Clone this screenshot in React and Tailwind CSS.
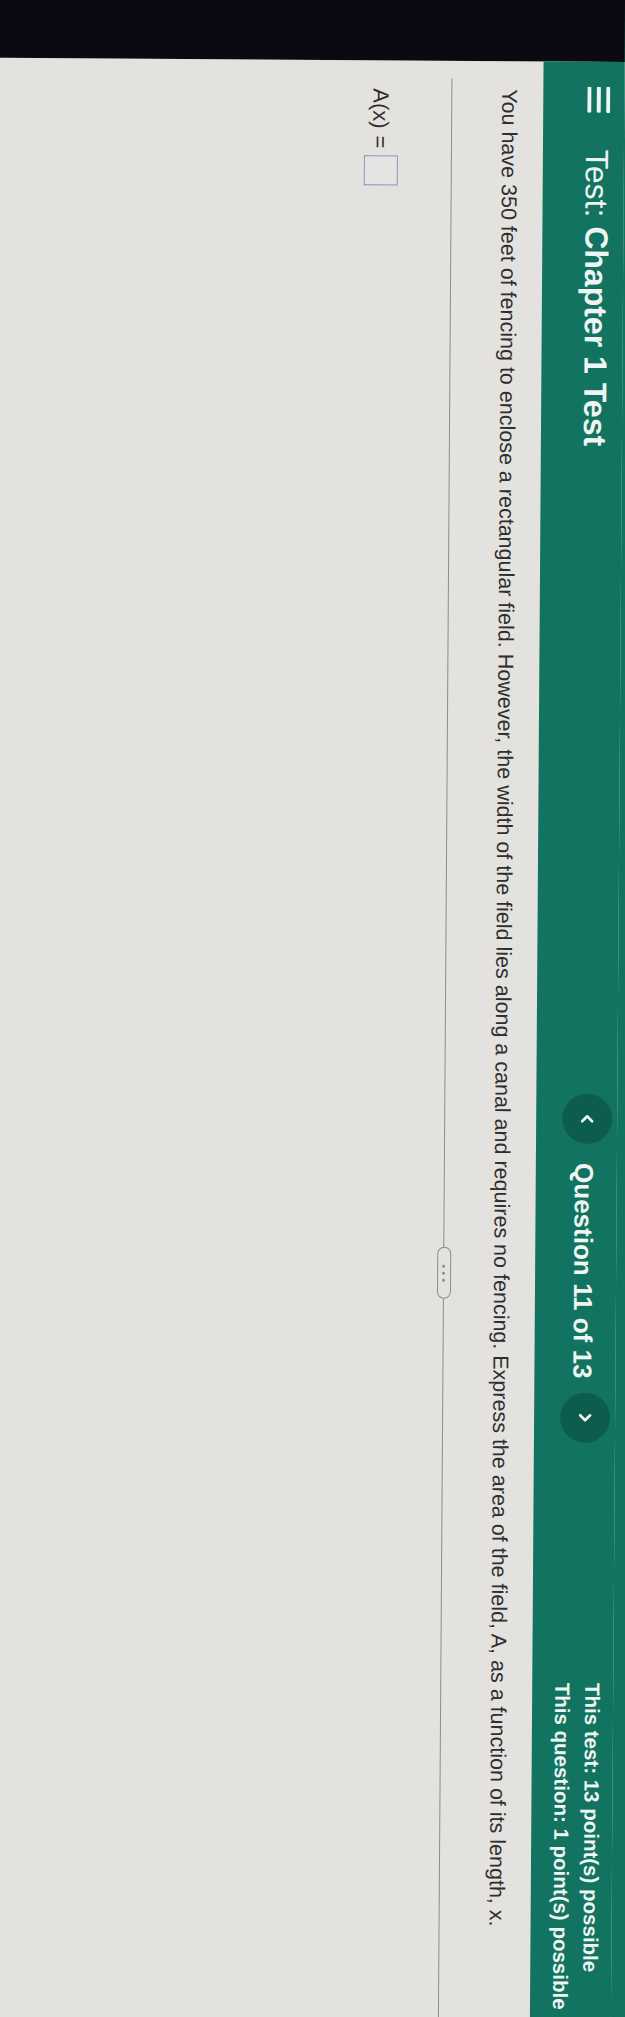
import React from "react";

function Hamburger() {
  return (
    <svg width="26" height="23" viewBox="0 0 26 23" className="shrink-0">
      <rect x="0" y="0" width="26" height="4" rx="1" fill="#eef5f2" />
      <rect x="0" y="9.5" width="26" height="4" rx="1" fill="#eef5f2" />
      <rect x="0" y="19" width="26" height="4" rx="1" fill="#eef5f2" />
    </svg>
  );
}

function NavButton({ dir }) {
  return (
    <div className="w-[50px] h-[50px] rounded-full bg-[#0c5d4e] flex items-center justify-center shrink-0">
      <svg width="10" height="14" viewBox="0 0 10 14">
        {dir === "left" ? (
          <path d="M7.5 2 L2.5 7 L7.5 12" fill="none" stroke="#f2f7f5" strokeWidth="2.6" strokeLinecap="round" strokeLinejoin="round" />
        ) : (
          <path d="M2.5 2 L7.5 7 L2.5 12" fill="none" stroke="#f2f7f5" strokeWidth="2.6" strokeLinecap="round" strokeLinejoin="round" />
        )}
      </svg>
    </div>
  );
}

export default function App() {
  return (
    <div className="w-[625px] h-[2017px] overflow-hidden bg-[#117360] font-['Liberation_Sans',Arial,sans-serif]">
      <div className="w-[2040px] h-[625px] origin-top-left rotate-[90.4deg] translate-x-[625px] flex">
        <div className="w-[62px] h-full bg-[#0b0a12] shrink-0" />
        <div className="flex-1 flex flex-col h-full bg-[#e4e2de]">
          <div className="h-[81px] bg-[#117360] flex items-start pl-[25px] pr-[30px] text-[#eef5f2] shrink-0">
            <div className="mt-[14px]">
              <Hamburger />
            </div>
            <div className="ml-[37px] mt-[8px] text-[32px] leading-[38px] whitespace-nowrap">
              <span className="font-normal">Test:</span> <span className="font-bold">Chapter 1 Test</span>
            </div>
            <div className="ml-[648px] mt-[5px] flex items-center">
              <NavButton dir="left" />
              <div className="ml-[19px] mt-[6px] text-[26px] leading-[30px] font-bold whitespace-nowrap">Question 11 of 13</div>
              <div className="ml-[14px]">
                <NavButton dir="right" />
              </div>
            </div>
            <div className="ml-auto mt-[6px] flex flex-col text-[20.5px] leading-[30px] font-bold whitespace-nowrap">
              <div>This test: 13 point(s) possible</div>
              <div>This question: 1 point(s) possible</div>
            </div>
          </div>
          <div className="flex-1 flex flex-col">
            <p className="mt-[21px] pl-[28px] text-[21.5px] leading-[26px] text-[#2e2e2e] whitespace-nowrap">
              You have 350 feet of fencing to enclose a rectangular field. However, the width of the field lies along a canal and requires no fencing. Express the area of the field, A, as a function of its length, x.
            </p>
            <div className="mt-[37px] ml-[18px] flex items-center h-[14px]">
              <div className="w-[1168px] h-px bg-[#8c8c8c]" />
              <div className="w-[52px] h-[14px] rounded-full border-[1.5px] border-[#8c8c8c] flex items-center justify-center gap-[4px] shrink-0">
                <span className="w-[3px] h-[3px] rounded-full bg-[#8c8c8c]" />
                <span className="w-[3px] h-[3px] rounded-full bg-[#8c8c8c]" />
                <span className="w-[3px] h-[3px] rounded-full bg-[#8c8c8c]" />
              </div>
              <div className="flex-1 h-px bg-[#8c8c8c]" />
            </div>
            <div className="mt-[47px] pl-[28px] flex items-center text-[22px] text-[#2e2e2e]">
              <span>A(x)</span>
              <span className="ml-[7px]">=</span>
              <span className="ml-[7px] w-[30px] h-[34px] border-[1.5px] border-[#8f90b6] bg-[#e6e4e2]" />
            </div>
          </div>
        </div>
      </div>
    </div>
  );
}
